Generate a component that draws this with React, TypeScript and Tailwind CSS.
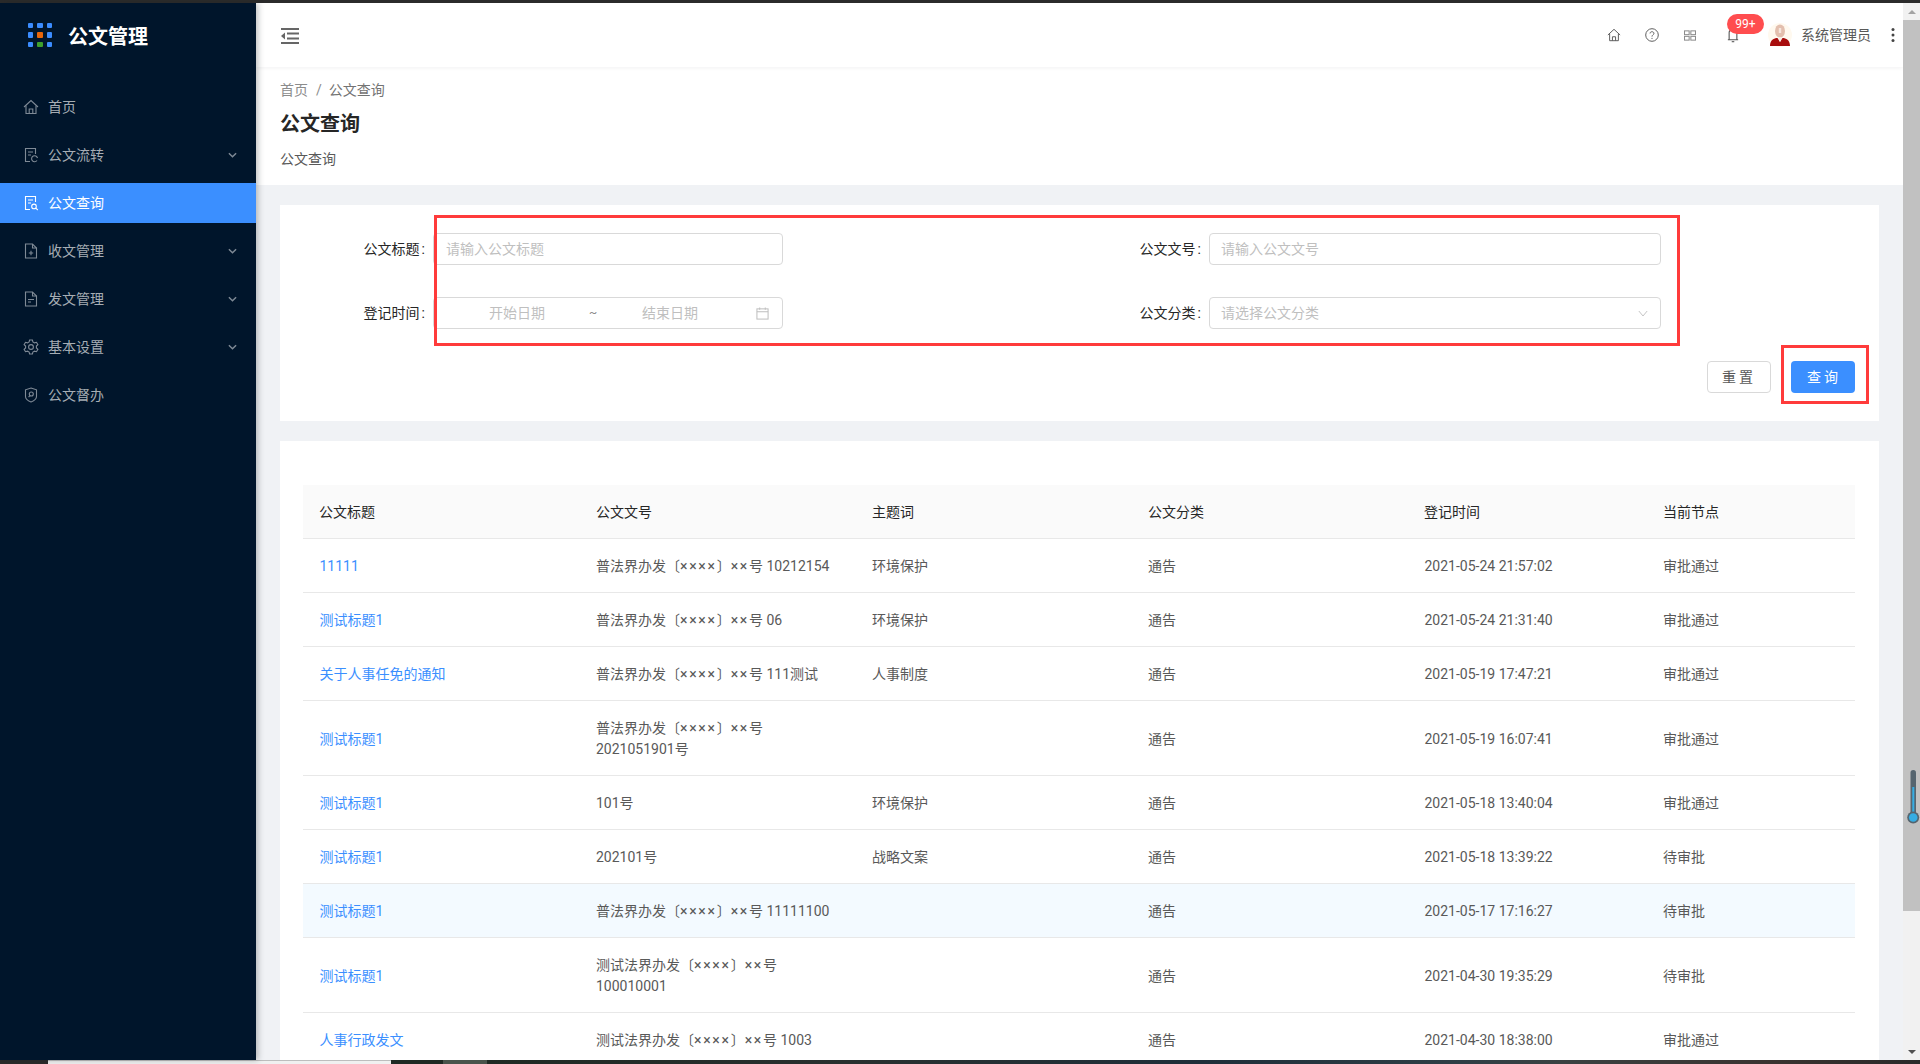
import React from "react";

const FONT = "font-['Roboto','Noto_Sans_CJK_SC',sans-serif]";

const ICON = "w-4 h-4 shrink-0";

function HomeIcon({ cls = ICON }: { cls?: string }) {
  return (
    <svg viewBox="0 0 16 16" className={cls} fill="none" stroke="currentColor" strokeWidth="1.1">
      <path d="M1 8 L8 1.5 L15 8" />
      <path d="M3 6.6 V14.5 H13 V6.6" />
      <path d="M6.2 14.5 V10 H9.8 V14.5" />
    </svg>
  );
}
function DocBase() {
  return <path d="M12.5 7 V1.5 H2.5 V14.5 H7" />;
}
function DocSync() {
  return (
    <svg viewBox="0 0 16 16" className={ICON} fill="none" stroke="currentColor" strokeWidth="1.1">
      <DocBase />
      <path d="M5 5 H10 M5 8 H8" />
      <path d="M14.5 11 A3 3 0 1 0 14 13.5" />
    </svg>
  );
}
function DocSearch() {
  return (
    <svg viewBox="0 0 16 16" className={ICON} fill="none" stroke="currentColor" strokeWidth="1.1">
      <DocBase />
      <path d="M5 5 H10 M5 8 H8" />
      <circle cx="11" cy="11.4" r="2.3" />
      <path d="M12.8 13.2 L14.8 15" />
    </svg>
  );
}
function DocPlus() {
  return (
    <svg viewBox="0 0 16 16" className={ICON} fill="none" stroke="currentColor" strokeWidth="1.1">
      <path d="M9.5 1 H2.5 V15 H13.5 V5 Z" />
      <path d="M9.5 1 V5 H13.5" />
      <path d="M5.8 10 H10.2 M8 7.8 V12.2" />
    </svg>
  );
}
function DocMinus() {
  return (
    <svg viewBox="0 0 16 16" className={ICON} fill="none" stroke="currentColor" strokeWidth="1.1">
      <path d="M9.5 1 H2.5 V15 H13.5 V5 Z" />
      <path d="M9.5 1 V5 H13.5" />
      <path d="M5 8.5 H11 M5 11 H8" />
    </svg>
  );
}
function GearIcon() {
  return (
    <svg viewBox="0 0 16 16" className={ICON} fill="none" stroke="currentColor" strokeWidth="1.1">
      <path d="M6.6 1 H9.4 L9.9 3 L11.5 3.9 L13.5 3.3 L14.9 5.7 L13.4 7.1 V8.9 L14.9 10.3 L13.5 12.7 L11.5 12.1 L9.9 13 L9.4 15 H6.6 L6.1 13 L4.5 12.1 L2.5 12.7 L1.1 10.3 L2.6 8.9 V7.1 L1.1 5.7 L2.5 3.3 L4.5 3.9 L6.1 3 Z" />
      <circle cx="8" cy="8" r="2.4" />
    </svg>
  );
}
function ShieldIcon() {
  return (
    <svg viewBox="0 0 16 16" className={ICON} fill="none" stroke="currentColor" strokeWidth="1.1">
      <path d="M8 1 L13.5 2.8 V9.5 C13.5 12 10.5 14 8 15 C5.5 14 2.5 12 2.5 9.5 V2.8 Z" />
      <circle cx="8.3" cy="7" r="2" />
      <path d="M6.9 8.6 L5.6 10.2" />
    </svg>
  );
}
function Chevron() {
  return (
    <svg viewBox="0 0 10 6" className="w-[9px] h-[6px] shrink-0" fill="none" stroke="currentColor" strokeWidth="1.6">
      <path d="M1 1 L5 5 L9 1" />
    </svg>
  );
}

const MENU: { label: string; icon: React.ReactNode; arrow?: boolean; active?: boolean }[] = [
  { label: "首页", icon: <HomeIcon /> },
  { label: "公文流转", icon: <DocSync />, arrow: true },
  { label: "公文查询", icon: <DocSearch />, active: true },
  { label: "收文管理", icon: <DocPlus />, arrow: true },
  { label: "发文管理", icon: <DocMinus />, arrow: true },
  { label: "基本设置", icon: <GearIcon />, arrow: true },
  { label: "公文督办", icon: <ShieldIcon /> },
];

function Logo() {
  const colors = ["#3b8cff", "#3b8cff", "#3b8cff", "#3b8cff", "#e8650a", "#3b8cff", "#3b8cff", "#3fa02c", "#3b8cff"];
  return (
    <div className="grid grid-cols-3 gap-[4px] w-[24px] shrink-0">
      {colors.map((c, i) => (
        <span key={i} className="w-[5.33px] h-[5.33px] rounded-[1px]" style={{ background: c }} />
      ))}
    </div>
  );
}

function Sidebar() {
  return (
    <aside className="relative z-10 w-[256px] shrink-0 bg-[#00152b] shadow-[2px_0_6px_rgba(29,35,41,0.3)]">
      <div className="h-[64px] flex items-center pl-[28px]">
        <Logo />
        <span className="ml-[16px] mt-[4px] text-[20px] font-bold text-white leading-[28px]">公文管理</span>
      </div>
      <nav className="pt-[20px]">
        {MENU.map((m) => (
          <div
            key={m.label}
            className={
              "h-[40px] mb-[8px] flex items-center pl-[23px] pr-[19px] text-[14px] " +
              (m.active ? "bg-[#3b8fff] text-white" : "text-[#a6adb4]")
            }
          >
            <span className={m.active ? "text-white" : "text-[#7f8a96]"}>{m.icon}</span>
            <span className="ml-[9px] flex-1">{m.label}</span>
            {m.arrow && (
              <span className="text-[#7f8a96]">
                <Chevron />
              </span>
            )}
          </div>
        ))}
      </nav>
    </aside>
  );
}

function Avatar() {
  return (
    <svg viewBox="0 0 24 24" className="w-[24px] h-[24px] shrink-0">
      <circle cx="12" cy="12" r="12" fill="#fff9ef" />
      <ellipse cx="12" cy="8" rx="5" ry="6.6" fill="#e3bfae" />
      <path d="M10.8 5 H13.2 V10 H10.8 Z" fill="#f6e6dd" />
      <path d="M2 23 C2 17 6 15 9.5 15 L12 19 L14.5 15 C18 15 22 17 22 23 Z" fill="#a80d0d" />
      <path d="M10 14.6 L12 19 L14 14.6 Z" fill="#f5f0ea" />
    </svg>
  );
}

function TopBar() {
  return (
    <header className="h-[64px] shrink-0 bg-white flex items-center pl-[25px] shadow-[0_1px_4px_rgba(0,21,41,0.06)] relative z-[1]">
      <svg viewBox="0 0 18 16" className="w-[18px] h-[16px] mt-[1px] text-[#666]" fill="currentColor">
        <rect x="0" y="0" width="18" height="2" />
        <rect x="0" y="14" width="18" height="2" />
        <rect x="6" y="4.5" width="12" height="2" />
        <rect x="6" y="9.5" width="12" height="2" />
        <path d="M4 4.5 V11.5 L0 8 Z" />
      </svg>
      <div className="flex-1" />
      <div className="flex items-center text-[#595959]">
        <HomeIcon cls="w-[14px] h-[14px]" />
        <svg viewBox="0 0 16 16" className="w-[14px] h-[14px] ml-[24px]" fill="none" stroke="currentColor" strokeWidth="1.1">
          <circle cx="8" cy="8" r="7.2" />
          <path d="M5.8 6.2 C5.8 3.6 10.2 3.6 10.2 6.2 C10.2 7.8 8 7.8 8 9.8" />
          <circle cx="8" cy="11.8" r="0.7" fill="currentColor" stroke="none" />
        </svg>
        <svg viewBox="0 0 14 12" className="w-[12px] h-[11px] ml-[25px]" fill="none" stroke="#8c8c8c" strokeWidth="1.2">
          <rect x="0.6" y="0.6" width="5.4" height="4.4" />
          <rect x="8" y="0.6" width="5.4" height="4.4" />
          <rect x="0.6" y="7" width="5.4" height="4.4" />
          <rect x="8" y="7" width="5.4" height="4.4" />
        </svg>
        <div className="relative ml-[31px] w-[12px] h-[16px]">
          <svg viewBox="0 0 14 18" className="w-[12px] h-[16px]" fill="none" stroke="currentColor" strokeWidth="1.3">
            <path d="M1 14.5 H13 M2.5 14.5 V6 C2.5 2 11.5 2 11.5 6 V14.5" />
            <path d="M5.5 16.8 H8.5" />
          </svg>
          <span className="absolute left-0 top-[-13px] h-[20px] w-[37px] rounded-full bg-[#ff4d4f] text-white text-[12px] leading-[20px] text-center">
            99+
          </span>
        </div>
        <div className="ml-[29px]">
          <Avatar />
        </div>
        <span className="ml-[9px] text-[14px] text-[#595959]">系统管理员</span>
        <svg viewBox="0 0 4 14" className="w-[4px] h-[14px] ml-[20px] mr-[8px] text-[#444]" fill="currentColor">
          <circle cx="2" cy="1.6" r="1.5" />
          <circle cx="2" cy="7" r="1.5" />
          <circle cx="2" cy="12.4" r="1.5" />
        </svg>
      </div>
    </header>
  );
}

function PageHeader() {
  return (
    <div className="h-[118px] shrink-0 bg-white pl-[24px] pt-[12px]">
      <div className="flex items-center h-[22px] text-[14px] text-[#8c8c8c]">
        <span>首页</span>
        <span className="ml-[8px] mr-[7px]">/</span>
        <span className="text-[#737373]">公文查询</span>
      </div>
      <h1 className="mt-[7px] h-[32px] text-[20px] leading-[32px] font-bold text-[#262626]">公文查询</h1>
      <p className="mt-[8px] text-[14px] leading-[22px] text-[#595959]">公文查询</p>
    </div>
  );
}

function FieldBox({ children }: { children: React.ReactNode }) {
  return (
    <div className="h-[32px] border border-[#d9d9d9] rounded-[4px] flex items-center text-[14px] text-[#bfbfbf] bg-white">
      {children}
    </div>
  );
}

function FieldLabel({ text }: { text: string }) {
  return (
    <div className="text-[14px] text-[#262626] text-right leading-[32px] pr-[2px]">
      {text}
      <span className="ml-[2px]">:</span>
    </div>
  );
}

function FormCard() {
  return (
    <section className="relative bg-white h-[216px] pt-[28px]">
      <div className="grid grid-cols-[147px_356px_420px_458px] gap-y-[32px]">
        <FieldLabel text="公文标题" />
        <div className="pl-[6px]">
          <FieldBox>
            <span className="pl-[12px]">请输入公文标题</span>
          </FieldBox>
        </div>
        <FieldLabel text="公文文号" />
        <div className="pl-[6px]">
          <FieldBox>
            <span className="pl-[11px]">请输入公文文号</span>
          </FieldBox>
        </div>
        <FieldLabel text="登记时间" />
        <div className="pl-[6px]">
          <FieldBox>
            <span className="pl-[10px] w-[156px] text-center">开始日期</span>
            <span className="w-[6px] flex justify-center text-[#8c8c8c] text-[12px]">~</span>
            <span className="w-[148px] text-center">结束日期</span>
            <svg viewBox="0 0 14 14" className="w-[13px] h-[13px] ml-[12px]" fill="none" stroke="#bfbfbf" strokeWidth="1.1">
              <rect x="1" y="2" width="12" height="11" />
              <path d="M1 5 H13 M4 0.5 V3 M10 0.5 V3" />
            </svg>
          </FieldBox>
        </div>
        <FieldLabel text="公文分类" />
        <div className="pl-[6px]">
          <FieldBox>
            <span className="pl-[11px] flex-1">请选择公文分类</span>
            <svg viewBox="0 0 12 8" className="w-[10px] h-[7px] mr-[12px]" fill="none" stroke="#bfbfbf" strokeWidth="1.1">
              <path d="M1 1 L6 7 L11 1" />
            </svg>
          </FieldBox>
        </div>
      </div>
      <div className="flex justify-end gap-[20px] mt-[32px] pr-[24px]">
        <button className="w-[64px] h-[32px] border border-[#d9d9d9] rounded-[4px] bg-white text-[14px] text-[#595959] tracking-[3px]">
          重置
        </button>
        <button className="w-[64px] h-[32px] pl-[2px] rounded-[4px] bg-[#3b8fff] text-[14px] text-white tracking-[3px]">
          查询
        </button>
      </div>
      <div className="absolute left-[154px] top-[10px] w-[1246px] h-[131px] border-[3px] border-[#ff3b3b] pointer-events-none" />
      <div className="absolute left-[1501px] top-[140px] w-[88px] h-[59px] border-[3px] border-[#ff3b3b] pointer-events-none" />
    </section>
  );
}

type Row = { t: string; n: string; k: string; d: string; s: string; hl?: boolean };
const P = "普法界办发〔××××〕××号";
const T = "测试法界办发〔××××〕××号";
const ROWS: Row[] = [
  { t: "11111", n: P + " 10212154", k: "环境保护", d: "2021-05-24 21:57:02", s: "审批通过" },
  { t: "测试标题1", n: P + " 06", k: "环境保护", d: "2021-05-24 21:31:40", s: "审批通过" },
  { t: "关于人事任免的通知", n: P + " 111测试", k: "人事制度", d: "2021-05-19 17:47:21", s: "审批通过" },
  { t: "测试标题1", n: P + "\n2021051901号", k: "", d: "2021-05-19 16:07:41", s: "审批通过" },
  { t: "测试标题1", n: "101号", k: "环境保护", d: "2021-05-18 13:40:04", s: "审批通过" },
  { t: "测试标题1", n: "202101号", k: "战略文案", d: "2021-05-18 13:39:22", s: "待审批" },
  { t: "测试标题1", n: P + " 11111100", k: "", d: "2021-05-17 17:16:27", s: "待审批", hl: true },
  { t: "测试标题1", n: T + "\n100010001", k: "", d: "2021-04-30 19:35:29", s: "待审批" },
  { t: "人事行政发文", n: T + " 1003", k: "", d: "2021-04-30 18:38:00", s: "审批通过" },
];
const HEADS = ["公文标题", "公文文号", "主题词", "公文分类", "登记时间", "当前节点"];

function DocNo({ value }: { value: string }) {
  return (
    <>
      {value.split(/(×+|\n)/).map((part, i) => {
        if (part === "\n") return <br key={i} />;
        if (part.startsWith("×")) {
          return (
            <span key={i} className="tracking-[1.7px]">
              {part}
            </span>
          );
        }
        return part;
      })}
    </>
  );
}

function TableCard() {
  const td = "px-[16px] pt-[17px] pb-[15px] border-b border-[#e8e8e8] text-[14px] leading-[21px] text-[#595959] align-middle";
  return (
    <section className="bg-white mt-[20px] pt-[44px] px-[23px] flex-1 overflow-hidden">
      <table className="w-[1552px] table-fixed border-collapse">
        <colgroup>
          <col className="w-[277px]" />
          <col className="w-[276px]" />
          <col className="w-[276px]" />
          <col className="w-[276px]" />
          <col className="w-[239px]" />
          <col className="w-[208px]" />
        </colgroup>
        <thead>
          <tr>
            {HEADS.map((h) => (
              <th
                key={h}
                className="px-[16px] pt-[17px] pb-[15px] bg-[#fafafa] border-b border-[#e8e8e8] text-left font-normal text-[14px] leading-[21px] text-[#262626]"
              >
                {h}
              </th>
            ))}
          </tr>
        </thead>
        <tbody>
          {ROWS.map((r, i) => (
            <tr key={i} className={r.hl ? "bg-[#f3faff]" : ""}>
              <td className={td + " !pl-[16.5px] !text-[#3b8fff]"}>{r.t}</td>
              <td className={td}>
                <DocNo value={r.n} />
              </td>
              <td className={td}>{r.k}</td>
              <td className={td}>通告</td>
              <td className={td + " !pl-[16.5px]"}>{r.d}</td>
              <td className={td}>{r.s}</td>
            </tr>
          ))}
        </tbody>
      </table>
    </section>
  );
}

function Scrollbar() {
  return (
    <div className="relative w-[17px] shrink-0 bg-[#f1f1f1] flex flex-col items-center">
      <div className="h-[17px] w-full flex items-center justify-center">
        <span className="w-0 h-0 border-x-[4px] border-x-transparent border-b-[4px] border-b-[#a3a3a3]" />
      </div>
      <div className="w-full h-[891px] bg-[#c1c1c1]" />
      <div className="flex-1" />
      <div className="h-[17px] w-full flex items-center justify-center">
        <span className="w-0 h-0 border-x-[4px] border-x-transparent border-t-[4px] border-t-[#505050]" />
      </div>
      <svg viewBox="0 0 13 56" className="absolute left-[4px] top-[766px] w-[13px] h-[56px]">
        <rect x="3.5" y="1" width="5.5" height="46" rx="2.7" fill="#56656f" />
        <rect x="5.3" y="18" width="2" height="30" fill="#35ade3" />
        <circle cx="6.2" cy="48.5" r="6" fill="#56656f" />
        <circle cx="6.2" cy="48.5" r="4.3" fill="#35ade3" />
      </svg>
    </div>
  );
}

function BottomStrip() {
  return (
    <div className="h-[4px] shrink-0 flex">
      <div className="w-[48px] bg-[#2a2a2a]" />
      <div className="w-[343px] bg-[#f0f0f0] border-t border-[#bdbdbd]" />
      <div className="w-[52px] bg-[#1f2a24]" />
      <div className="w-[44px] bg-[#4a544c]" />
      <div className="flex-1 bg-[linear-gradient(90deg,#1f2a24,#29302f_25%,#1f2f3a_50%,#2f3f46_68%,#3a4242_75%,#3a3330_90%,#2a2a2a)]" />
    </div>
  );
}

export default function App() {
  return (
    <div className={"h-screen w-screen overflow-hidden flex flex-col bg-[#f0f2f5] " + FONT}>
      <div className="h-[3px] shrink-0 bg-[#2b2b2b]" />
      <div className="flex-1 min-h-0 flex">
        <Sidebar />
        <main className="flex-1 min-w-0 flex flex-col overflow-hidden">
          <TopBar />
          <PageHeader />
          <div className="flex-1 min-h-0 flex flex-col pt-[20px] pl-[24px] pr-[24px]">
            <FormCard />
            <TableCard />
          </div>
        </main>
        <Scrollbar />
      </div>
      <BottomStrip />
    </div>
  );
}
